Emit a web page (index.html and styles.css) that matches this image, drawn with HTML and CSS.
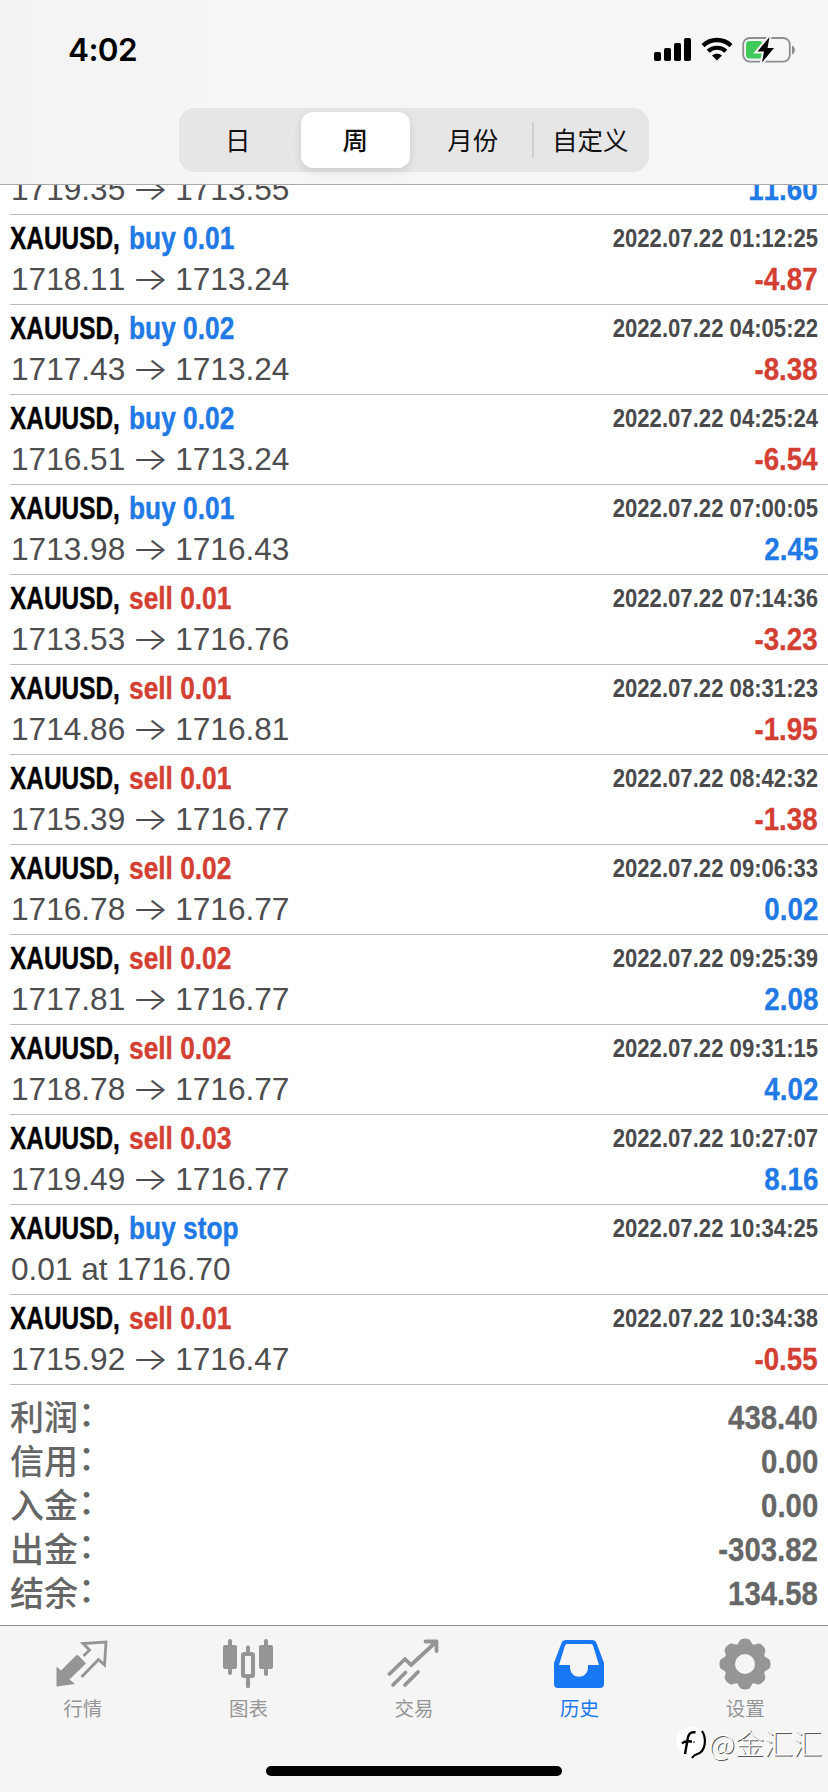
FILE: index.html
```
<!DOCTYPE html>
<html lang="zh-CN">
<head>
<meta charset="utf-8">
<title>历史</title>
<link rel="stylesheet" href="styles.css">
</head>
<body>
<div class="screen">
  <header class="header">
    <div class="status">
      <div class="clock">4:02</div>
      <div class="status-icons">
        <svg class="signal" width="38" height="24" viewBox="0 0 38 24"><rect x="0" y="15" width="7" height="9" rx="1.8"/><rect x="10" y="11" width="7" height="13" rx="1.8"/><rect x="20" y="6" width="7" height="18" rx="1.8"/><rect x="30" y="1" width="7" height="23" rx="1.8"/></svg>
        <svg class="wifi" width="32" height="24" viewBox="0 0 32 24"><path d="M2 8.6C9.8 1.2 22.2 1.2 30 8.6" fill="none" stroke="#000" stroke-width="4.4"/><path d="M7.2 14.2C12 9.6 20 9.6 24.8 14.2" fill="none" stroke="#000" stroke-width="4.2"/><path d="M11 18.6C14 16 18 16 21 18.6L16 23.6Z"/></svg>
        <svg class="battery" width="54" height="28" viewBox="0 0 54 28"><rect x="1.2" y="1" width="46.6" height="23.6" rx="6.5" fill="none" stroke="#8e8e90" stroke-width="1.8"/><path d="M50 8.5C53.8 10 53.8 16 50 17.5Z" fill="#8e8e90"/><rect x="4" y="4" width="17" height="17.600" rx="3.5" fill="#3fca5b"/><path d="M27.5 0L15.5 14.4H22L20 25.5L32 10.9H25.5Z" stroke="#f6f6f7" stroke-width="4"/><path d="M27.5 0L15.5 14.4H22L20 25.5L32 10.9H25.5Z"/></svg>
      </div>
    </div>
    <div class="segments">
      <div class="segment">日</div>
      <div class="segment active">周</div>
      <div class="segment">月份</div>
      <div class="segment divided">自定义</div>
    </div>
  </header>
  <main class="list" id="list"></main>
  <section class="summary">
    <div class="total"><span>利润<i>：</i></span><b>438.40</b></div>
    <div class="total"><span>信用<i>：</i></span><b>0.00</b></div>
    <div class="total"><span>入金<i>：</i></span><b>0.00</b></div>
    <div class="total"><span>出金<i>：</i></span><b>-303.82</b></div>
    <div class="total"><span>结余<i>：</i></span><b>134.58</b></div>
  </section>
  <nav class="tabs">
    <div class="tab">
      <svg class="tab-icon" viewBox="0 0 52 52"><path d="M0.500 28.500L5 32.500L20 17.500Q21.500 16.500 23 18L30 25.500L13.500 41.500L19 46L0.500 48.500Z"/><path d="M27.500 18L33.500 12L27 5.500L50 4L48.500 27L42.500 21.500L25.500 39" fill="none" stroke="currentColor" stroke-width="2.800"/></svg>
      <span>行情</span>
    </div>
    <div class="tab">
      <svg class="tab-icon" viewBox="0 0 52 52"><rect x="1" y="7" width="14" height="24" rx="2"/><rect x="6" y="1" width="4" height="36" rx="2"/><rect x="37" y="7" width="14" height="24" rx="2"/><rect x="42" y="1" width="4" height="37" rx="2"/><rect x="21" y="16" width="10" height="22" fill="none" stroke="currentColor" stroke-width="4" rx="1"/><rect x="24" y="7.500" width="4" height="8" rx="1.500"/><rect x="24" y="39" width="4" height="11" rx="1.500"/></svg>
      <span>图表</span>
    </div>
    <div class="tab">
      <svg class="tab-icon" viewBox="0 0 52 52"><g fill="none" stroke="currentColor" stroke-width="3.800" stroke-linecap="round" stroke-linejoin="round"><path d="M2.500 36L18 21L24 27L49 4M38.500 3.500H49.500V13"/><path d="M6 47L18.500 34.500M18 47L31 34"/></g></svg>
      <span>交易</span>
    </div>
    <div class="tab current">
      <svg class="tab-icon" viewBox="0 0 52 52"><path fill-rule="evenodd" d="M13 2H39Q42.500 2 43.500 5L51 25V46Q51 50 47 50H5Q1 50 1 46V25L8.500 5Q9.500 2 13 2ZM14 6Q12.500 6 12 7.500L6 27H17V29C17 42 35 42 35 29V27H46L40 7.500Q39.500 6 38 6Z"/></svg>
      <span>历史</span>
    </div>
    <div class="tab">
      <svg class="tab-icon" viewBox="0 0 52 52"><g id="gear"><circle cx="26" cy="26" r="15.500" fill="none" stroke="currentColor" stroke-width="11"/></g></svg>
      <span>设置</span>
    </div>
    <div class="home"></div>
    <div class="watermark">
      <svg width="34" height="34" viewBox="0 0 34 34"><circle cx="16" cy="15" r="15" fill="#fff"/><path d="M20.500 5.500C15 4 13 8 12.500 13L10 27M7 16.500C10 13 12 14.500 17 14.500" fill="none" stroke="#000" stroke-width="2.400"/><path d="M27 4C31 10 31 20 26 25C23 28 20 26 17 31" fill="none" stroke="#000" stroke-width="2.200"/><circle cx="19" cy="15" r=".8"/></svg>
      <span>@金汇汇</span>
    </div>
  </nav>
</div>
<script src="app.js"></script>
</body>
</html>
```

FILE: styles.css
```
* { box-sizing: border-box; }
body { margin: 0; background: #fff; font-family: "Liberation Sans", "Noto Sans CJK SC", sans-serif; font-kerning: none; }
.screen { width: 828px; height: 1792px; display: flex; flex-direction: column; overflow: hidden; }

.header { height: 185px; flex: none; background: linear-gradient(90deg, #f3f3f4, #f7f6f6 35%, #f6f6f6 65%, #f5f6f8); border-bottom: 1px solid #a9a9ab; }
.status { height: 108px; padding: 30px 32px 0 68px; display: flex; justify-content: space-between; }
.clock { font: 600 31.5px/40px Inter, sans-serif; letter-spacing: -0.6px; }
.status-icons { display: flex; align-items: flex-start; gap: 9px; padding-top: 7px; }
.segments { width: 470px; height: 64px; margin: 0 auto; padding: 3px 0; display: grid; grid-template-columns: repeat(4, 1fr); background: #e7e6e7; border-radius: 16px; }
.segment { display: flex; align-items: center; justify-content: center; position: relative; padding-bottom: 2px; font: 400 25.5px/34px "Noto Sans CJK SC", sans-serif; color: #111; }
.active { margin: 1px 4.5px; background: #fff; border-radius: 12px; box-shadow: 0 3px 8px rgba(0,0,0,.12); font-weight: 500; }
.divided::before { content: ""; position: absolute; left: 0; top: 11px; width: 2px; height: 36px; background: #cfcfd1; }

.list { height: 1200px; flex: none; overflow: hidden; display: flex; flex-direction: column; justify-content: flex-end; }
.row { height: 90px; flex: none; margin-left: 10px; padding: 2px 10px 0 0; border-bottom: 1px solid #bdbdbf; }
.line { display: flex; justify-content: space-between; height: 41px; align-items: center; }
.title { display: flex; font-size: 31.5px; font-weight: 700; line-height: 36px; white-space: pre; }
.symbol { width: 118.5px; color: #000; }
.squeeze { display: inline-block; white-space: pre; transform-origin: 0 50%; -webkit-text-stroke: 0.4px currentColor; }
.symbol .squeeze { transform: scaleX(.775); }
.side .squeeze { transform: scaleX(.835); }
.buy, .gain { color: #2079e4; }
.sell, .loss { color: #d33f33; }
.date { padding-top: 2px; font-size: 25px; font-weight: 700; color: #4a4a4c; transform: scaleX(.885); transform-origin: 100% 50%; white-space: nowrap; }
.price { display: flex; align-items: center; padding-left: 1px; font-size: 31.6px; line-height: 36px; color: #4d4d4f; white-space: pre; }
.arrow { width: 50px; text-align: center; font-family: Inter, sans-serif; font-weight: 300; transform: scaleX(1.25); }
.profit { padding-top: 3px; font-size: 31px; font-weight: 700; transform: scaleX(.895); transform-origin: 100% 50%; -webkit-text-stroke: 0.3px currentColor; }

.summary { height: 240px; flex: none; padding: 10px 10px 0 10px; }
.total { height: 44px; display: flex; align-items: center; justify-content: space-between; color: #666; }
.total span { padding-bottom: 2px; font: 500 34px/42px "Noto Sans CJK SC", sans-serif; }
.total i { display: inline-block; font-style: normal; transform: translateY(-4px); }
.total b { font-size: 33px; padding-top: 1px; transform: scaleX(.89); transform-origin: 100% 50%; -webkit-text-stroke: 0.3px currentColor; }

.tabs { position: relative; flex: 1; display: grid; grid-template-columns: repeat(5, 1fr); background: #f5f5f5; border-top: 1px solid #8e8e90; color: #959595; }
.tab { display: flex; flex-direction: column; align-items: center; padding-top: 12px; font: 400 19.5px/28px "Noto Sans CJK SC", sans-serif; }
.tab-icon { width: 52px; height: 52px; margin-right: 1px; fill: currentColor; margin-bottom: 4px; }
.current { color: #1877f2; }
.home { position: absolute; left: 266px; top: 140px; width: 296px; height: 10px; border-radius: 5px; background: #000; }
.watermark { position: absolute; right: 6px; top: 96px; display: flex; align-items: center; font: 300 29px/40px "Noto Sans CJK SC", sans-serif; color: #fff; text-shadow: 1px 1px 0 #555; }
.watermark span { padding-bottom: 3px; }
```

FILE: app.js
```
const deals = [
  ["buy 0.01", "", "1719.35", "1713.55", "11.60"],
  ["buy 0.01", "01:12:25", "1718.11", "1713.24", "-4.87"],
  ["buy 0.02", "04:05:22", "1717.43", "1713.24", "-8.38"],
  ["buy 0.02", "04:25:24", "1716.51", "1713.24", "-6.54"],
  ["buy 0.01", "07:00:05", "1713.98", "1716.43", "2.45"],
  ["sell 0.01", "07:14:36", "1713.53", "1716.76", "-3.23"],
  ["sell 0.01", "08:31:23", "1714.86", "1716.81", "-1.95"],
  ["sell 0.01", "08:42:32", "1715.39", "1716.77", "-1.38"],
  ["sell 0.02", "09:06:33", "1716.78", "1716.77", "0.02"],
  ["sell 0.02", "09:25:39", "1717.81", "1716.77", "2.08"],
  ["sell 0.02", "09:31:15", "1718.78", "1716.77", "4.02"],
  ["sell 0.03", "10:27:07", "1719.49", "1716.77", "8.16"],
  ["buy stop", "10:34:25", "0.01 at 1716.70", "", ""],
  ["sell 0.01", "10:34:38", "1715.92", "1716.47", "-0.55"]
];
document.getElementById("list").innerHTML = deals.map(([side, time, from, to, profit]) => `
  <div class="row">
    ${time ? `<div class="line">
      <div class="title"><span class="symbol"><span class="squeeze">XAUUSD,</span></span><span class="side ${side.split(" ")[0]}"><span class="squeeze">${side}</span></span></div>
      <div class="date">2022.07.22 ${time}</div>
    </div>` : `<div class="line"></div>`}
    <div class="line">
      <div class="price">${from}${to ? `<span class="arrow">→</span>${to}` : ""}</div>
      <div class="profit ${profit.startsWith("-") ? "loss" : "gain"}">${profit}</div>
    </div>
  </div>`).join("");

const gear = document.getElementById("gear");
for (let i = 0; i < 8; i++) {
  const tooth = document.createElementNS("http://www.w3.org/2000/svg", "path");
  tooth.setAttribute("d", "M17 9L20.500 3Q21.500 0.500 26 0.500Q30.500 0.500 31.500 3L35 9Z");
  tooth.setAttribute("transform", `rotate(${i * 45} 26 26)`);
  gear.appendChild(tooth);
}
```
